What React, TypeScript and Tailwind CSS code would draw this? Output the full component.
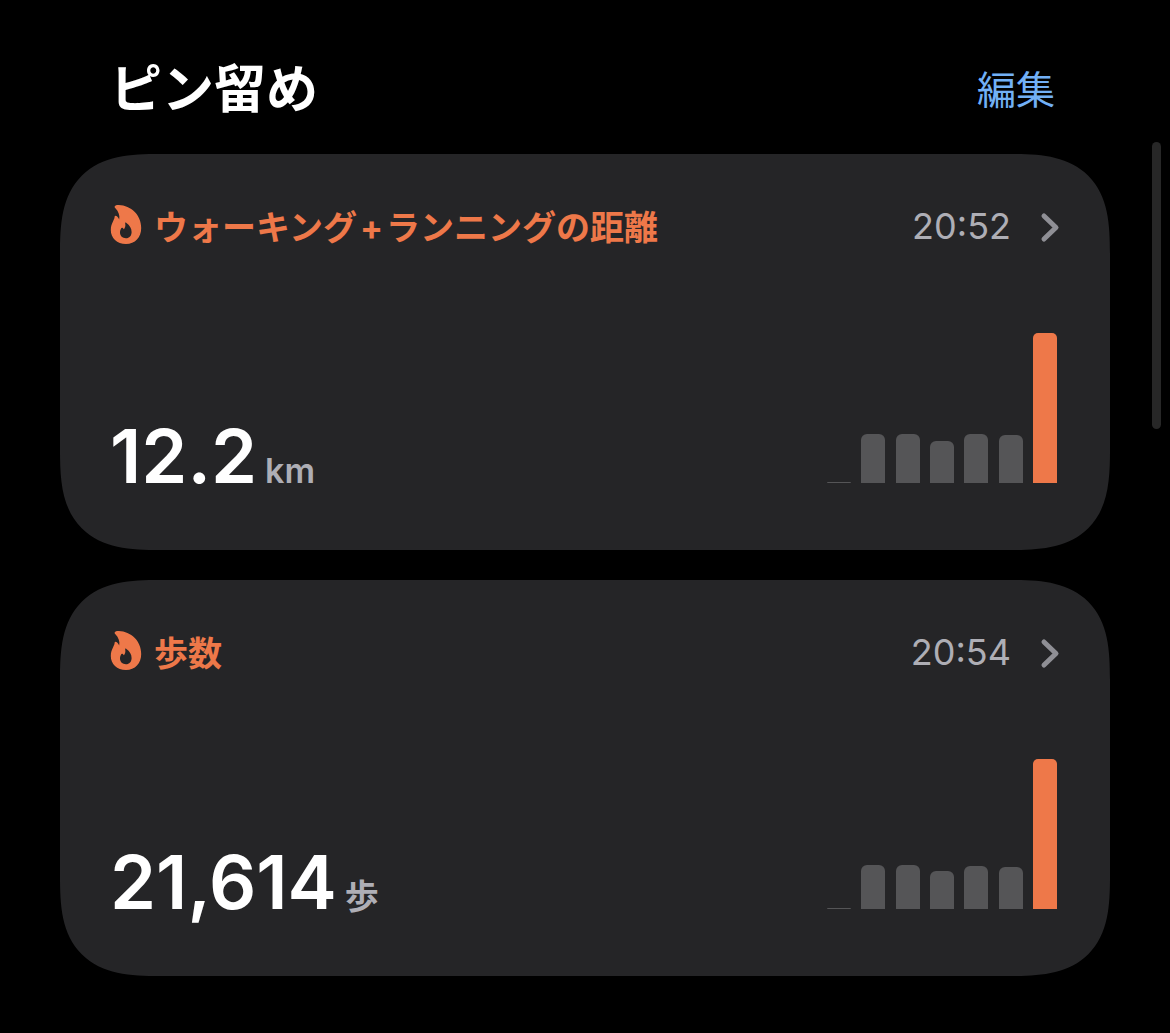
import { Fragment } from "react";

type Metric = {
  title: string[];
  time: string;
  value: string;
  unit: string;
  bars: number[];
};

const metrics: Metric[] = [
  { title: ["ウォーキング", "ランニングの距離"], time: "20:52", value: "12.2", unit: "km", bars: [1, 49, 49, 42, 49, 48, 150] },
  { title: ["歩数"], time: "20:54", value: "21,614", unit: "歩", bars: [1, 44, 44, 38, 43, 42, 150] },
];

function Flame() {
  return (
    <svg viewBox="0 0 32 40" className="h-10 w-8 shrink-0 self-start fill-[#ee7849]" aria-hidden="true">
      <path
        fillRule="evenodd"
        d="M4.800 2.200C5.400 1.200 7 .9 8.800 1C21 1.400 31.200 11 31.200 24C31.200 33.500 25 40 16 40C7 40 .8 34 .8 26C.8 22.500 1.600 20.500 3 17.500C4.200 15 4.500 14.300 4.600 12.800C4.700 11.500 5.800 11.300 6.900 12.200C8 13.200 8.500 14.200 9.200 15.400C10 11.500 8.600 7.500 5.400 4.200C4.700 3.500 4.400 2.900 4.800 2.200ZM15.200 19.600C14.900 18.600 15.500 18.300 16.400 18.900C19.600 20.900 21.600 24.200 21.600 28C21.600 31.800 19.400 34.300 15.900 34.300C12.500 34.300 10 32 10 28.600C10 26.800 10.500 25.400 11.200 24.200C11.600 23.500 12.300 23.500 12.800 24.100L13.900 25.300C15.200 23.700 15.700 21.600 15.200 19.600Z"
      />
    </svg>
  );
}

function Chevron() {
  return (
    <svg viewBox="0 0 20 32" className="h-8 w-5 fill-none stroke-[#8f8f95] stroke-[5]" aria-hidden="true">
      <path d="M4 4L16 15.500L4 27" strokeLinecap="round" strokeLinejoin="round" />
    </svg>
  );
}

function Chart({ bars }: { bars: number[] }) {
  return (
    <div className="flex w-[230px] items-end justify-between" role="img" aria-label="過去7日間">
      {bars.map((height, i) => (
        <div
          key={i}
          className={
            i === bars.length - 1
              ? "w-6 rounded-t-[5px] bg-[#ee7849]"
              : "w-6 rounded-t-[6px] bg-[#555557]"
          }
          style={{ height }}
        />
      ))}
    </div>
  );
}

function Card({ metric }: { metric: Metric }) {
  return (
    <article className="rounded-[100px] [corner-shape:superellipse(1.5)] bg-[#252527] px-[50px] pt-[50px] pb-[53px]">
      <button type="button" className="flex h-12 w-full items-center text-left">
        <Flame />
        <h2 className="ml-3 grow text-[34px] leading-[48px] font-bold text-[#ee7849]">
          {metric.title.map((part, i) => (
            <Fragment key={part}>
              {i > 0 && <span className="mx-[3px]">+</span>}
              {part}
            </Fragment>
          ))}
        </h2>
        <time className="mr-[29px] self-start text-[36px] leading-[44px] text-[#aeaeb5]">{metric.time}</time>
        <Chevron />
      </button>
      <div className="mt-[81px] flex items-baseline justify-between pr-[3px]">
        <p className="flex items-baseline gap-2 leading-[52px]">
          <span className="text-[74px] font-semibold text-white">{metric.value}</span>
          <span className="text-[34px] font-semibold text-[#aeaeb5]">{metric.unit}</span>
        </p>
        <Chart bars={metric.bars} />
      </div>
    </article>
  );
}

export default function App() {
  return (
    <div className="relative min-h-screen bg-black px-[60px] pt-[50px] pb-14 font-['Inter','Noto_Sans_CJK_JP',sans-serif]" lang="ja">
      <header className="flex h-20 items-center justify-between pr-[55px] pl-[50px]">
        <h1 className="text-[52px] leading-[80px] font-bold text-white">ピン留め</h1>
        <button type="button" className="text-[39px] leading-[80px] text-[#72b0f6]">編集</button>
      </header>
      <main className="mt-6 flex flex-col gap-[30px]">
        {metrics.map((metric) => (
          <Card key={metric.value} metric={metric} />
        ))}
      </main>
      <div className="absolute top-[142px] right-[9px] h-[287px] w-[9px] rounded-full bg-[#272727]" />
    </div>
  );
}
